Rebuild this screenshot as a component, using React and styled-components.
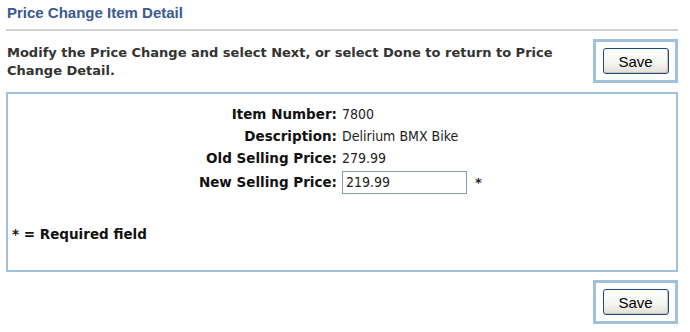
import React from "react";
import styled, { createGlobalStyle } from "styled-components";

const Global = createGlobalStyle`
  html, body { margin: 0; padding: 0; background: #fff; }
  body { font-family: "DejaVu Sans", sans-serif; color: #222; }
`;

const Page = styled.div`
  width: 672px;
  padding: 0 6px;
`;

const Title = styled.h1`
  margin: 0;
  height: 31px;
  padding: 4px 0 0 1px;
  box-sizing: border-box;
  font-family: "Liberation Sans", Arial, sans-serif;
  font-size: 15px;
  font-weight: bold;
  color: #3b5a8e;
  border-bottom: 2px solid #d0d0d0;
`;

const TopRow = styled.div`
  display: flex;
  justify-content: space-between;
  align-items: flex-start;
  margin-top: 8px;
`;

const Instruction = styled.p`
  margin: 5px 0 0 1px;
  width: 575px;
  font-family: "DejaVu Sans", sans-serif;
  font-size: 13px;
  line-height: 18px;
  font-weight: bold;
  color: #333;
`;

const SaveFrame = styled.div`
  width: 85px;
  height: 44px;
  box-sizing: border-box;
  border: 3px solid #a0c1dd;
  display: flex;
  align-items: center;
  justify-content: center;
`;

const Button = styled.button`
  width: 66px;
  height: 26px;
  box-sizing: border-box;
  border: 1px solid #1c4a86;
  border-radius: 3px;
  background: linear-gradient(#ffffff, #f4f4f0 60%, #e0ded4);
  box-shadow: inset -1px -1px 0 #c8c4b4;
  font-family: "Liberation Sans", Arial, sans-serif;
  font-size: 15px;
  color: #000;
  padding: 0;
`;

const DetailBox = styled.div`
  margin-top: 9px;
  height: 180px;
  box-sizing: border-box;
  border: 2px solid #a0c1dd;
  padding-top: 9px;
`;

const FieldGrid = styled.div`
  display: grid;
  grid-template-columns: 329px 1fr;
  column-gap: 5px;
`;

const Label = styled.div`
  text-align: right;
  font-family: "DejaVu Sans", sans-serif;
  font-weight: bold;
  font-size: 13.5px;
  color: #111;
  height: ${(p) => (p.$tall ? 26 : 22)}px;
  line-height: ${(p) => (p.$tall ? 26 : 22)}px;
`;

const Value = styled.div`
  font-family: "DejaVu Sans Condensed", "DejaVu Sans", sans-serif;
  font-size: 14px;
  color: #222;
  display: flex;
  align-items: center;
  height: ${(p) => (p.$tall ? 26 : 22)}px;
`;

const PriceInput = styled.input`
  width: 125px;
  height: 23px;
  box-sizing: border-box;
  border: 1px solid #7f9db9;
  padding: 0 3px;
  margin: 0;
  font-family: "DejaVu Sans Condensed", "DejaVu Sans", sans-serif;
  font-size: 14px;
  color: #222;
  outline: none;
`;

const Required = styled.span`
  margin-left: 8px;
  font-family: "DejaVu Sans", sans-serif;
  font-weight: bold;
  font-size: 13px;
`;

const Legend = styled.p`
  margin: 31px 0 0 4px;
  font-family: "DejaVu Sans", sans-serif;
  font-weight: bold;
  font-size: 13.5px;
  color: #111;
`;

const BottomRow = styled.div`
  display: flex;
  justify-content: flex-end;
  margin-top: 8px;
`;

const fields = [
  { label: "Item Number:", value: "7800" },
  { label: "Description:", value: "Delirium BMX Bike" },
  { label: "Old Selling Price:", value: "279.99" },
];

export default function App() {
  return (
    <Page>
      <Global />
      <Title>Price Change Item Detail</Title>
      <TopRow>
        <Instruction>
          Modify the Price Change and select Next, or select Done to return to Price Change Detail.
        </Instruction>
        <SaveFrame>
          <Button>Save</Button>
        </SaveFrame>
      </TopRow>
      <DetailBox>
        <FieldGrid>
          {fields.map((f) => (
            <React.Fragment key={f.label}>
              <Label>{f.label}</Label>
              <Value>{f.value}</Value>
            </React.Fragment>
          ))}
          <Label $tall>New Selling Price:</Label>
          <Value $tall>
            <PriceInput defaultValue="219.99" />
            <Required>*</Required>
          </Value>
        </FieldGrid>
        <Legend>* = Required field</Legend>
      </DetailBox>
      <BottomRow>
        <SaveFrame>
          <Button>Save</Button>
        </SaveFrame>
      </BottomRow>
    </Page>
  );
}
